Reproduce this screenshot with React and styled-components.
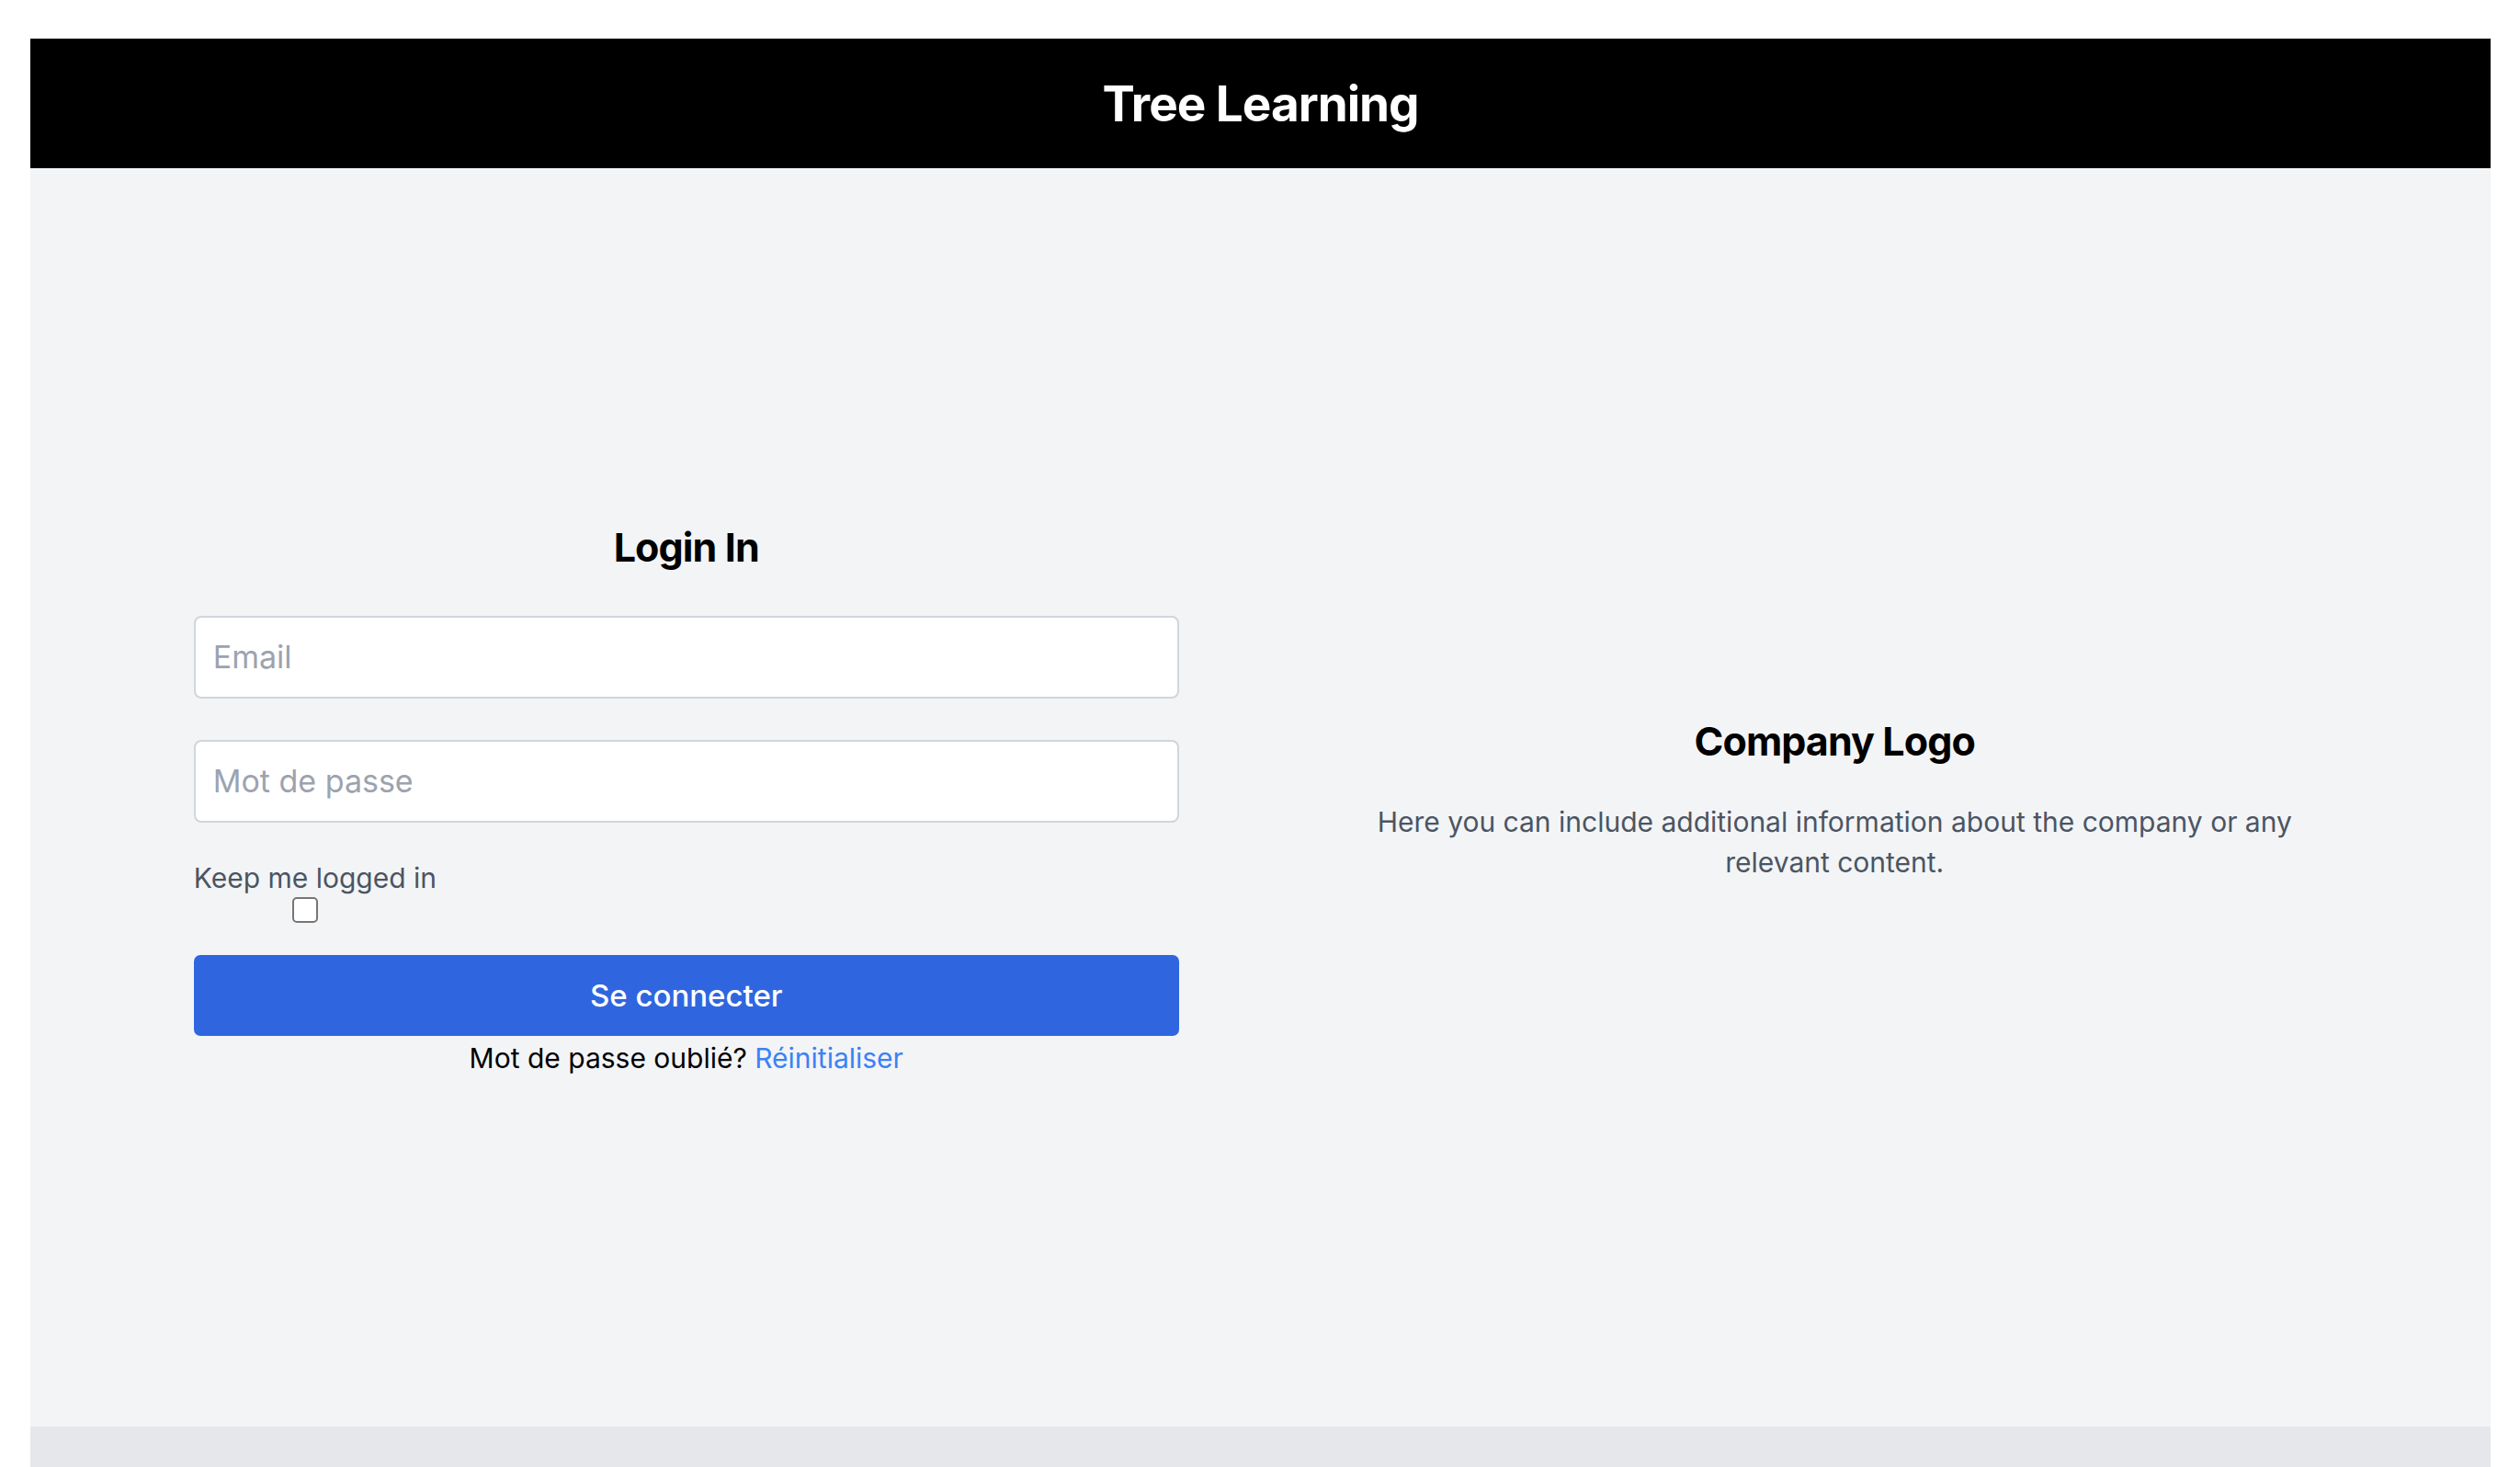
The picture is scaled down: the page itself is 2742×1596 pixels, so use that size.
import React from 'react';
import styled, { createGlobalStyle } from 'styled-components';

const GlobalStyle = createGlobalStyle`
  html, body {
    margin: 0;
    padding: 0;
    background: #fff;
    font-family: Inter, 'Liberation Sans', sans-serif;
  }
  * {
    box-sizing: border-box;
  }
`;

const Page = styled.div`
  padding: 42px 32px 0 33px;
  display: flex;
  flex-direction: column;
`;

const Header = styled.header`
  height: 141px;
  background: #000;
  display: flex;
  align-items: center;
  justify-content: center;
`;

const Brand = styled.h1`
  margin: 0;
  color: #fff;
  font-size: 53px;
  font-weight: 700;
  line-height: normal;
  letter-spacing: -1px;
`;

const Main = styled.main`
  min-height: 1369px;
  background: #f3f4f6;
  display: grid;
  grid-template-columns: 1fr 1fr;
  align-items: center;
  padding: 0 89px;
`;

const Column = styled.section`
  display: flex;
  flex-direction: column;
  align-items: center;
`;

const Form = styled.form`
  width: 1072px;
  display: flex;
  flex-direction: column;
`;

const Title = styled.h2`
  margin: 0 0 ${props => props.gap || 0}px;
  font-size: 43px;
  line-height: 60px;
  font-weight: 700;
  color: #000;
  text-align: center;
  letter-spacing: -0.9px;
`;

const Input = styled.input`
  height: 90px;
  margin-bottom: ${props => props.gap || 0}px;
  padding: 0 19px;
  border: 2px solid #d1d5db;
  border-radius: 8px;
  background: #fff;
  font-family: inherit;
  font-size: 34px;
  color: #111827;
  outline: none;

  &::placeholder {
    color: #9ca3af;
  }
`;

const KeepLabel = styled.label`
  font-size: 30px;
  line-height: 40px;
  color: #4b5563;
  margin-top: 2px;
`;

const Checkbox = styled.input.attrs({ type: 'checkbox' })`
  appearance: none;
  width: 28px;
  height: 28px;
  margin: 1px 0 0 107px;
  border: 2px solid #767676;
  border-radius: 5px;
  background: #fff;
`;

const SubmitButton = styled.button`
  margin-top: 35px;
  height: 88px;
  border: none;
  border-radius: 7px;
  background: #2f66e0;
  color: #fff;
  font-family: inherit;
  font-size: 33px;
  font-weight: 500;
  cursor: pointer;
`;

const Forgot = styled.p`
  margin: 4px 0 0;
  font-size: 30px;
  line-height: 40px;
  color: #000;
  text-align: center;
`;

const Link = styled.a`
  color: #3b82f6;
  text-decoration: none;
`;

const Info = styled.div`
  width: 1072px;
  text-align: center;
`;

const Description = styled.p`
  margin: 0;
  font-size: 30px;
  line-height: 44px;
  color: #4b5563;
`;

const Footer = styled.footer`
  height: 120px;
  background: #e5e7eb;
`;

export default function App() {
  return (
    <>
      <GlobalStyle />
      <Page>
        <Header>
          <Brand>Tree Learning</Brand>
        </Header>
        <Main>
          <Column>
            <Form onSubmit={e => e.preventDefault()}>
              <Title gap={45}>Login In</Title>
              <Input type="email" placeholder="Email" gap={45} />
              <Input type="password" placeholder="Mot de passe" gap={38} />
              <KeepLabel htmlFor="keep">Keep me logged in</KeepLabel>
              <Checkbox id="keep" />
              <SubmitButton type="submit">Se connecter</SubmitButton>
              <Forgot>
                Mot de passe oublié? <Link href="#">Réinitialiser</Link>
              </Forgot>
            </Form>
          </Column>
          <Column>
            <Info>
              <Title gap={36}>Company Logo</Title>
              <Description>
                Here you can include additional information about the company or any relevant content.
              </Description>
            </Info>
          </Column>
        </Main>
        <Footer />
      </Page>
    </>
  );
}
